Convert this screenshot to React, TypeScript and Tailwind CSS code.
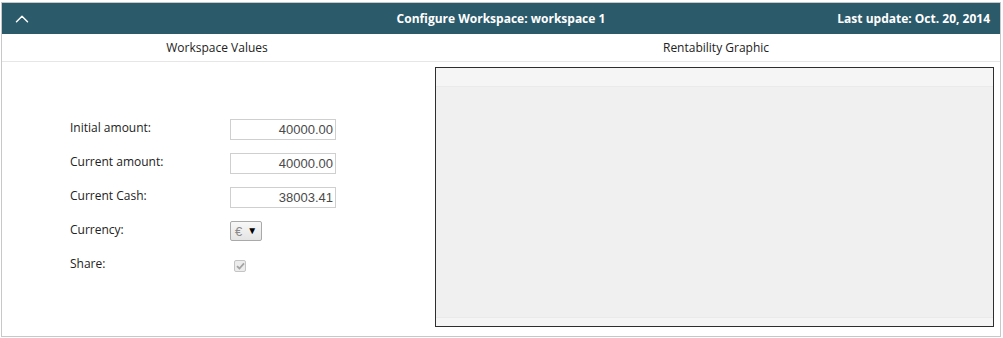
import { ChevronUp } from 'lucide-react';

const rows = [
  { label: 'Initial amount:', value: '40000.00' },
  { label: 'Current amount:', value: '40000.00' },
  { label: 'Current Cash:', value: '38003.41' },
];

export default function App() {
  return (
    <div className="w-[1003px] h-[338px] bg-white pt-[2px] pl-px" style={{ fontFamily: '"Open Sans", sans-serif' }}>
      <div className="w-[1000px] h-[335px] border border-[#c8c8c8] flex flex-col">
        {/* header */}
        <div className="h-[31px] bg-[#2b5a6b] grid grid-cols-[1fr_auto_1fr] items-center text-white text-[12px] font-bold pl-[10px] pr-[10px]">
          <div>
            <ChevronUp className="w-[22px] h-[22px] -ml-[1px]" strokeWidth={1.6} />
          </div>
          <div className="text-center">Configure Workspace: workspace 1</div>
          <div className="text-right">Last update: Oct. 20, 2014</div>
        </div>

        {/* sub header */}
        <div className="h-[28px] flex items-center border-b border-[#e6e6e6] text-[12px] text-[#222]">
          <div className="w-[430px] text-center">Workspace Values</div>
          <div className="flex-1 text-center">Rentability Graphic</div>
        </div>

        <div className="flex flex-1">
          {/* form */}
          <div className="w-[433px] pl-[68px] pt-[50px] text-[12px] text-[#222]">
            {rows.map((r) => (
              <div key={r.label} className="flex items-center h-[34px]">
                <div className="w-[160px] -mt-[3px]">{r.label}</div>
                <div className="w-[106px] h-[21px] border border-[#cfcfcf] text-right pr-[2px] text-[13px] text-[#4a4a4a] leading-[19px]" style={{ fontFamily: '"Liberation Sans", Arial, sans-serif' }}>
                  {r.value}
                </div>
              </div>
            ))}
            <div className="flex items-center h-[34px]">
              <div className="w-[160px] -mt-[3px]">Currency:</div>
              <div className="w-[32px] h-[20px] border border-[#a9a9a9] rounded-[2px] bg-gradient-to-b from-[#f8f8f8] to-[#e4e4e4] flex items-center gap-[5px] pl-[4px] text-[13px] leading-none" style={{ fontFamily: '"Liberation Sans", Arial, sans-serif' }}>
                <span className="text-[#8a8a8a]">€</span>
                <span className="text-black text-[10px]">▼</span>
              </div>
            </div>
            <div className="flex items-center h-[34px]">
              <div className="w-[164px] -mt-[3px]">Share:</div>
              <div className="w-[12px] h-[12px] border border-[#c4c4c4] rounded-[2px] bg-[#ececec] flex items-center justify-center mt-[2px]">
                <svg width="9" height="8" viewBox="0 0 9 8">
                  <path d="M1 4.2 L3.4 6.5 L8 1.3" fill="none" stroke="#a3a3a3" strokeWidth="1.8" />
                </svg>
              </div>
            </div>
          </div>

          {/* graph */}
          <div className="flex-1 pt-[5px] pr-[6px] pb-[9px]">
            <div className="h-full border border-[#2e2e2e] bg-[#f0f0f0] flex flex-col">
              <div className="h-[19px] bg-[#f5f5f5] border-b border-[#eaeaea]" />
              <div className="flex-1" />
              <div className="h-[9px] bg-[#f5f5f5] border-t border-[#eaeaea]" />
            </div>
          </div>
        </div>
      </div>
    </div>
  );
}
